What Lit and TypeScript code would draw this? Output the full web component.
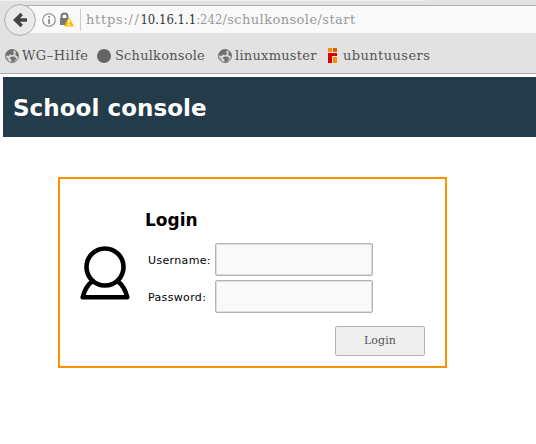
import { LitElement, html, css, svg } from "lit";
import { customElement } from "lit/decorators.js";

const globe = svg`
  <circle cx="7" cy="7" r="6.5" fill="#d8d8d8" stroke="#777" stroke-width="1"/>
  <path d="M.6 6.2C1.3 2.5 4.5.4 7 .5L9.5 1 8 3 9.2 4.6 7.4 6.2 5.2 5.4 3.4 7Z" fill="#707070"/>
  <path d="M10.4 1.4 12.7 3.3 13.5 7 11.6 7.2 10.2 5.4 10.8 3.6Z" fill="#707070"/>
  <path d="M4.4 9 7 7.4 9.6 7.8 11.4 9.4 9.4 12.6 6.4 13.4 6.6 10.8Z" fill="#707070"/>
  <path d="M.8 8.4 2.8 9 3.8 12.2Z" fill="#888"/>`;
const disc = svg`<circle cx="7" cy="7" r="7" fill="#666"/>`;
const ubuntuusers = svg`
  <path d="M3 0h4v4H3z" fill="#ff8c00"/><path d="M8 0h4v4H8z" fill="#e65c00"/>
  <path d="M3 5h9v3H7v7H3z" fill="#d80000"/><path d="M8 9h4v6H8z" fill="#ff8c00"/>`;

@customElement("app-root")
export class AppRoot extends LitElement {
  static styles = css`
    :host { display: block; height: 444px; background: #fff; overflow: hidden; }
    * { box-sizing: border-box; }
    svg { display: block; flex: none; }
    .chrome { height: 74px; background: #e2e2e2; border-bottom: 1px solid #acacac;
      font-family: "DejaVu Serif", serif; font-size: 13px; color: #555; }
    .tabs { height: 1px; width: 425px; background: #f0f0f0; }
    .nav { display: flex; height: 36px; padding: 3px 0 0 3px; }
    .back { position: relative; z-index: 1; }
    .url { flex: 1; margin: 1px 0 4px -17px; height: 28px; border-top: 1px solid #acacac;
      background: #f9f9f9; display: flex; align-items: center; padding-left: 22px; color: #999; }
    .lock { margin-left: 3px; }
    .sep { width: 1px; height: 22px; background: #ccc; margin: 0 5px 0 6px; }
    .address { white-space: nowrap; line-height: 20px; letter-spacing: .42px; }
    .scheme { letter-spacing: .7px; }
    .slashes { letter-spacing: 1.6px; }
    .host { color: #333; }
    .narrow { font-family: "DejaVu Serif Condensed", "DejaVu Serif", serif; font-stretch: condensed; letter-spacing: 0; }
    .marks { display: flex; height: 36px; padding-left: 5px; align-items: center; }
    .mark { display: flex; align-items: center; white-space: nowrap; gap: 3px; }
    .mark svg { margin-top: 2px; }
    .m1 { width: 92px; letter-spacing: .5px; } .m2 { width: 121px; gap: 4px; letter-spacing: .2px; }
    .m3 { width: 107px; letter-spacing: .25px; } .m4 { letter-spacing: .42px; }
    .m4 svg { margin-top: 1px; }
    .banner { margin: 3px 0 0 3px; height: 60px; background: #243b4a; color: #fff;
      font: bold 23px/62px "DejaVu Sans", sans-serif; padding-left: 10px; letter-spacing: .06px; }
    h1, h2 { margin: 0; font-size: inherit; }
    .card { margin: 40px 0 0 58px; width: 389px; height: 191px; border: 2px solid #ff9100;
      display: flex; padding: 29px 20px 0; font-family: "DejaVu Sans", sans-serif; color: #000; }
    .person { margin-top: 38px; }
    .form { margin-left: 15px; flex: 1; display: flex; flex-direction: column; }
    h2 { font: bold 17px/24px "DejaVu Sans", sans-serif; }
    .fields { margin-top: 11px; display: grid; gap: 4px; }
    .row { display: flex; align-items: center; height: 33px; padding-left: 3px; }
    label { width: 67px; padding-top: 2px; font-size: 11px; letter-spacing: .35px; white-space: nowrap; }
    input { width: 158px; height: 33px; border: 1px solid #b2b2b2; border-radius: 2px; outline: none;
      background: #f9f9f9; box-shadow: inset 0 0 0 1px #dedede; }
    button { align-self: flex-end; margin-top: 13px; width: 90px; height: 30px; padding: 0 0 1px;
      border: 1px solid #b2b2b2; border-radius: 2px; background: #efefef; color: #555;
      font: 11px "DejaVu Serif", serif; letter-spacing: .1px; }
  `;

  render() {
    return html`
      <div class="chrome">
        <div class="tabs"></div>
        <div class="nav">
          <svg class="back" width="34" height="32" viewBox="0 0 34 32">
            <circle cx="17" cy="16" r="15.4" fill="#eaeaea" stroke="#aaa"/>
            <path d="M24 16H12.5M18.7 9.9 12.6 16 18.7 22.1" fill="none" stroke="#444" stroke-width="3.6"/>
          </svg>
          <div class="url">
            <svg width="14" height="14" viewBox="0 0 14 14">
              <circle cx="7" cy="7" r="6.3" fill="none" stroke="#888" stroke-width="1.1"/>
              <path d="M6.2 3h1.7v1.7H6.2zM6.2 6h1.7v5H6.2z" fill="#888"/>
            </svg>
            <svg class="lock" width="15" height="15" viewBox="0 0 15 15">
              <path d="M2.5 7V4.5a3 3 0 0 1 6 0V7" fill="none" stroke="#777" stroke-width="2"/>
              <path d="M1 6h9v7H1z" fill="#777"/>
              <path d="M9.9 5.8 14.3 14H5.6Z" fill="#ffbf00" stroke="#ffbf00" stroke-linejoin="round"/>
              <path d="M9.2 7.5h1.5v3.7H9.2zM9.2 12h1.5v1.5H9.2z" fill="#fff"/>
            </svg>
            <div class="sep"></div>
            <div class="address"><span class="scheme">https:</span><span class="slashes">//</span><span class="host narrow">10.16.1.1</span><span class="narrow">:242</span>/schulkonsole/start</div>
          </div>
        </div>
        <div class="marks">
          <div class="mark m1"><svg width="14" height="14">${globe}</svg><span>WG–Hilfe</span></div>
          <div class="mark m2"><svg width="14" height="14">${disc}</svg><span>Schulkonsole</span></div>
          <div class="mark m3"><svg width="14" height="14">${globe}</svg><span>linuxmuster</span></div>
          <div class="mark m4"><svg width="15" height="15">${ubuntuusers}</svg><span>ubuntuusers</span></div>
        </div>
      </div>
      <header class="banner"><h1>School console</h1></header>
      <main class="card">
        <svg class="person" width="50" height="54" viewBox="0 0 50 54" fill="none" stroke="#000" stroke-width="4.6">
          <circle cx="25" cy="21" r="18.5"/>
          <path d="M12.5 35C8 38.5 4.5 44 2.7 51.2H47.3C45.5 44 42 38.5 37.5 35" stroke-linejoin="round"/>
        </svg>
        <div class="form">
          <h2>Login</h2>
          <div class="fields">
            <div class="row"><label for="user">Username:</label><input id="user" type="text"></div>
            <div class="row"><label for="pass">Password:</label><input id="pass" type="password"></div>
          </div>
          <button>Login</button>
        </div>
      </main>`;
  }
}
